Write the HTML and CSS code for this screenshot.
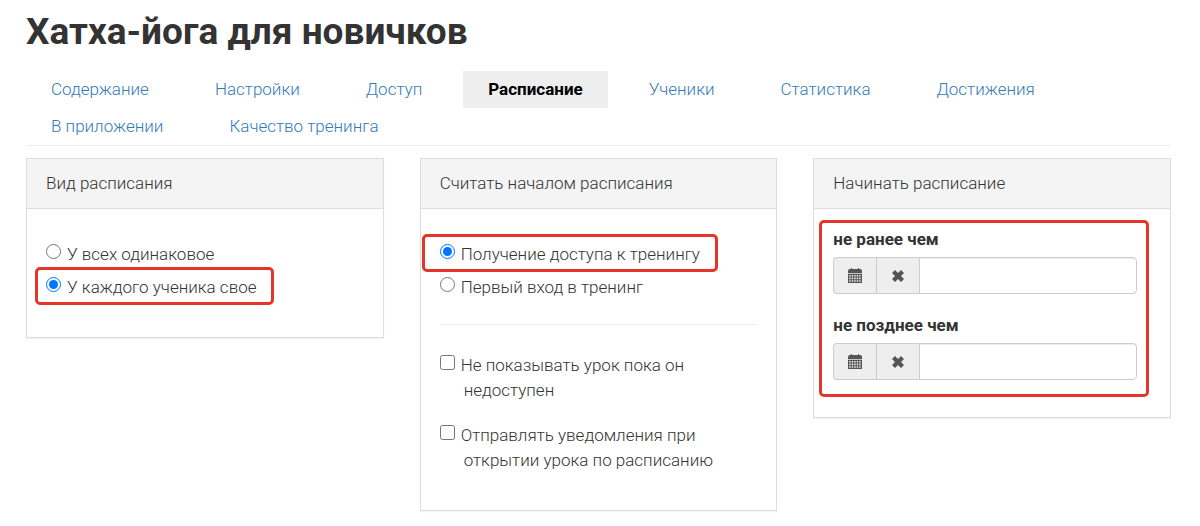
FILE: index.html
```html
<!DOCTYPE html>
<html lang="ru">
<head>
  <meta charset="UTF-8" />
  <title>Хатха-йога для новичков</title>
  <meta name="viewport" content="width=device-width, initial-scale=1.0" />
  <link rel="stylesheet" href="styles.css">
</head>
<body>

  <!-- Иконки -->
  <svg class="sprite" aria-hidden="true">
    <symbol id="icon-calendar" viewBox="0 0 14 15">
      <path d="M0 5V3q0-2 2-2h1V0h1v1h6V0h1v1h1q2 0 2 2v2z"/>
      <path fill-rule="evenodd" d="M0 5.7h14V15H0zM1.2 7v1.6h1.5V7zM3.7 7v1.6h1.5V7zM6.2 7v1.6h1.5V7zM8.7 7v1.6h1.5V7zM11.2 7v1.6h1.5V7zM1.2 9.6v1.6h1.5V9.6zM3.7 9.6v1.6h1.5V9.6zM6.2 9.6v1.6h1.5V9.6zM8.7 9.6v1.6h1.5V9.6zM11.2 9.6v1.6h1.5V9.6zM1.2 12.2v1.6h1.5v-1.6zM3.7 12.2v1.6h1.5v-1.6zM6.2 12.2v1.6h1.5v-1.6zM8.7 12.2v1.6h1.5v-1.6zM11.2 12.2v1.6h1.5v-1.6z"/>
    </symbol>
    <symbol id="icon-remove" viewBox="0 0 12 12">
      <path d="M3 0l3 3 3-3 3 3-3 3 3 3-3 3-3-3-3 3-3-3 3-3-3-3z"/>
    </symbol>
  </svg>

  <header>
    <h1>Хатха-йога для новичков</h1>
  </header>

  <nav class="tabs">
    <a href="#">Содержание</a>
    <a href="#">Настройки</a>
    <a href="#">Доступ</a>
    <a href="#" class="active">Расписание</a>
    <a href="#">Ученики</a>
    <a href="#">Статистика</a>
    <a href="#">Достижения</a>
    <a href="#">В приложении</a>
    <a href="#">Качество тренинга</a>
  </nav>

  <form class="panels">
    <section class="panel">
      <h2>Вид расписания</h2>
      <div class="panel-body">
        <label class="radio"><input type="radio" name="type" />У всех одинаковое</label>
        <label class="radio marked marked-narrow"><input type="radio" name="type" checked />У каждого ученика свое</label>
      </div>
    </section>

    <section class="panel">
      <h2>Считать началом расписания</h2>
      <div class="panel-body">
        <label class="radio marked"><input type="radio" name="start" checked />Получение доступа к тренингу</label>
        <label class="radio"><input type="radio" name="start" />Первый вход в тренинг</label>
        <hr>
        <label class="checkbox"><input type="checkbox" name="hide" />Не показывать урок пока он недоступен</label>
        <label class="checkbox"><input type="checkbox" name="notify" />Отправлять уведомления при открытии урока по расписанию</label>
      </div>
    </section>

    <section class="panel">
      <h2>Начинать расписание</h2>
      <div class="dates">
        <label for="date-from">не ранее чем</label>
        <div class="input-group">
          <button type="button" aria-label="Выбрать дату"><svg width="14" height="15"><use href="#icon-calendar"/></svg></button>
          <button type="button" aria-label="Очистить"><svg width="12" height="12"><use href="#icon-remove"/></svg></button>
          <input type="text" id="date-from" name="date-from" />
        </div>
        <label for="date-to">не позднее чем</label>
        <div class="input-group">
          <button type="button" aria-label="Выбрать дату"><svg width="14" height="15"><use href="#icon-calendar"/></svg></button>
          <button type="button" aria-label="Очистить"><svg width="12" height="12"><use href="#icon-remove"/></svg></button>
          <input type="text" id="date-to" name="date-to" />
        </div>
      </div>
    </section>
  </form>

</body>
</html>
```
FILE: styles.css
```css
* {
  box-sizing: border-box;
}
body {
  margin: 0;
  padding: 12px 29px 16px 26px;
  background: #fff;
  color: #333;
  font-family: Roboto, "Open Sans", sans-serif;
  font-size: 17px;
  font-weight: 300;
  line-height: 25px;
}
.sprite {
  display: none;
}
h1 {
  margin: 0 0 19px;
  font-size: 37px;
  font-weight: 700;
  line-height: 40px;
}
.tabs {
  display: flex;
  flex-wrap: wrap;
  column-gap: 16px;
  border-bottom: 1px solid #eee;
  margin-bottom: 12px;
}
.tabs a {
  padding: 6px 25px;
  color: #337ab7;
  text-decoration: none;
}
.tabs a.active {
  background: #eee;
  color: #000;
  font-weight: 700;
}
.panels {
  display: grid;
  grid-template-columns: repeat(3, minmax(0, 1fr));
  gap: 36px;
  align-items: start;
}
.panel {
  border: 1px solid #ddd;
  box-shadow: 0 1px 1px rgba(0,0,0,0.05);
}
.panel h2 {
  margin: 0;
  padding: 12px 19px;
  background: #f4f4f4;
  border-bottom: 1px solid #ddd;
  font-size: 17px;
  font-weight: 300;
  line-height: 25px;
}
.panel-body {
  padding: 29px 19px 33px;
}
.radio {
  display: block;
  width: fit-content;
  padding: 4px 0;
  position: relative;
}
.radio input, .checkbox input {
  width: 15px;
  height: 15px;
  margin: 0 6px 0 0;
  vertical-align: 1px;
}

/* Красная рамка вокруг важных настроек */
.marked::after {
  content: "";
  position: absolute;
  inset: -4px -18px -1px;
  border: 3px solid #e5352b;
  border-radius: 5px;
  pointer-events: none;
}
.marked-narrow::after {
  left: -11px;
}
hr {
  margin: 20px 0 28px;
  border: 0;
  border-top: 1px solid #eee;
}
.checkbox {
  display: block;
  max-width: 280px;
  margin-bottom: 4px;
  padding-left: 24px;
  text-indent: -24px;
}
.checkbox + .checkbox {
  margin-top: 20px;
}
.dates {
  margin: 11px 21px 20px 5px;
  padding: 4px 9px 14px 11px;
  border: 3px solid #e5352b;
  border-radius: 5px;
}
.dates label {
  display: block;
  margin-bottom: 5px;
  font-weight: 700;
}
.input-group {
  display: flex;
  height: 37px;
}
.input-group + label {
  margin-top: 19px;
}
.input-group button {
  display: flex;
  align-items: center;
  justify-content: center;
  width: 43px;
  padding: 0;
  background: #eee;
  border: 1px solid #ccc;
  border-right: 0;
  fill: #555;
}
.input-group button:first-child {
  border-radius: 4px 0 0 4px;
}
.input-group input {
  flex: 1;
  min-width: 0;
  padding: 6px 12px;
  border: 1px solid #ccc;
  border-radius: 0 4px 4px 0;
  box-shadow: inset 0 1px 1px rgba(0,0,0,0.075);
  font: inherit;
}

@media (max-width: 768px) {
  .panels {
    grid-template-columns: 1fr;
  }
}
```
